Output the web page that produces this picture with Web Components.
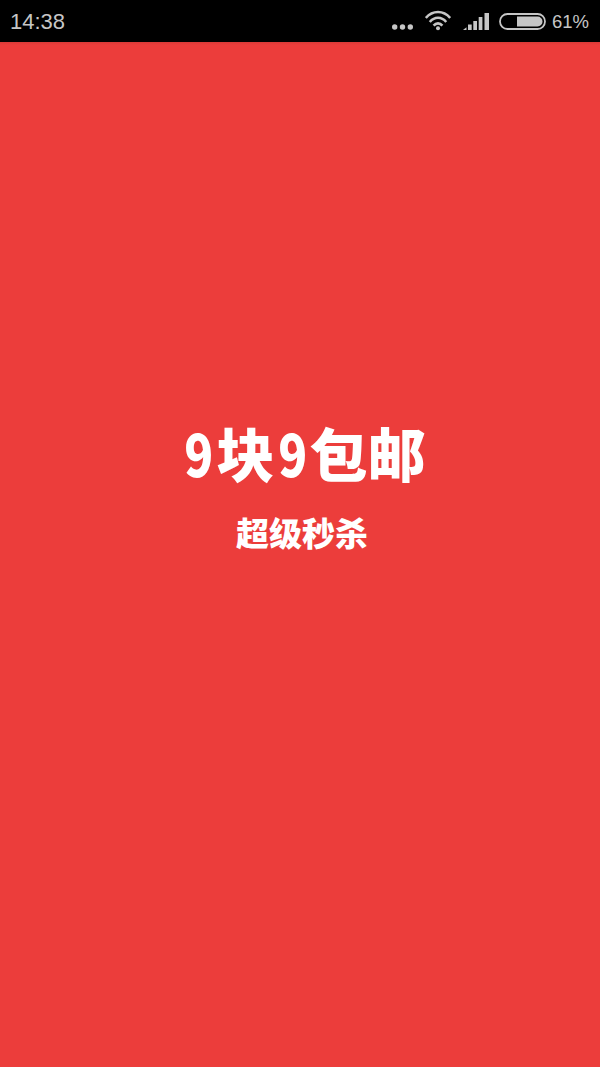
<!DOCTYPE html>
<html lang="zh">
<head>
<meta charset="utf-8">
<title>9块9包邮</title>
<style>
  html, body { margin: 0; height: 100%; background: #ec3d3b; }
  body { display: flex; flex-direction: column; height: 1067px; overflow: hidden; }
</style>
</head>
<body>
<status-bar time="14:38" battery="61%"></status-bar>
<splash-screen></splash-screen>
<script>
class StatusBar extends HTMLElement {
  constructor () {
    super()
    this.attachShadow({ mode: 'open' })
    this.shadowRoot.innerHTML = `
    <style>
      :host {
        display: flex;
        align-items: center;
        justify-content: space-between;
        flex: none;
        height: 42px;
        padding: 0 11px 0 10px;
        box-sizing: border-box;
        background: #000;
        color: #c6c6c6;
        font: 22px "Liberation Sans", Arial, sans-serif;
      }
      .icons { display: flex; align-items: center; }
      svg { display: block; }
      .time { padding-top: 2px; }
      .dots { margin-right: 12px; }
      .wifi { margin-right: 12px; }
      .signal { margin-right: 10px; }
      .battery { margin-right: 6px; }
      .level { font-size: 18.5px; padding-top: 1px; }
    </style>
    <span class="time">${this.getAttribute('time')}</span>
    <div class="icons">
      <svg class="dots" width="21" height="42" viewBox="0 0 21 42" fill="#c6c6c6">
        <circle cx="2.700" cy="27" r="2.700"/><circle cx="10.500" cy="27" r="2.700"/><circle cx="18.300" cy="27" r="2.700"/>
      </svg>
      <svg class="wifi" width="26" height="42" viewBox="0 0 26 42" fill="none" stroke="#c6c6c6" stroke-width="2.600">
        <path d="M.8 18C7.500 10 18.500 10 25.200 18"/>
        <path d="M4.800 22C9.600 16.400 16.400 16.400 21.200 22"/>
        <path d="M8.600 25.600C11.200 22.600 14.800 22.600 17.400 25.600"/>
        <circle cx="13" cy="28.300" r="2" fill="#c6c6c6" stroke="none"/>
      </svg>
      <svg class="signal" width="26" height="42" viewBox="0 0 26 42" fill="#c6c6c6">
        <path d="M0 30l3.500-2.800V30z"/>
        <rect x="5" y="24.500" width="3.700" height="5.500"/>
        <rect x="10.300" y="21" width="3.700" height="9"/>
        <rect x="15.700" y="17" width="3.700" height="13"/>
        <rect x="21.500" y="13" width="4.500" height="17"/>
      </svg>
      <svg class="battery" width="47" height="42" viewBox="0 0 47 42">
        <rect x="1" y="14" width="45" height="15" rx="7.500" fill="none" stroke="#c6c6c6" stroke-width="1.800"/>
        <path d="M18 16.500h20.500a5 5 0 0 1 0 10H18z" fill="#c6c6c6"/>
      </svg>
      <span class="level">${this.getAttribute('battery')}</span>
    </div>
    `
  }
}

class SplashScreen extends HTMLElement {
  constructor () {
    super()
    this.attachShadow({ mode: 'open' })
    this.shadowRoot.innerHTML = `
    <style>
      :host {
        display: flex;
        flex-direction: column;
        align-items: center;
        flex: 1;
        padding-top: 373px;
        background: linear-gradient(#d93a37, #ec3d3b 3px);
        color: #fff;
        font-family: "Noto Sans CJK SC", "Liberation Sans", sans-serif;
        font-weight: 900;
      }
      h1 {
        display: flex;
        margin: 0 0 0 7px;
        font-size: 58px;
        line-height: 74px;
        font-weight: 900;
        white-space: nowrap;
      }
      /* the logo's 9 is much narrower than the Noto one */
      .nine {
        display: inline-block;
        width: 35px;
        text-align: center;
        transform: scaleX(.82);
      }
      p {
        margin: 23px 0 0 4px;
        font-size: 33px;
        line-height: 40px;
        white-space: nowrap;
      }
    </style>
    <h1><span class="nine">9</span><span>块</span><span class="nine">9</span><span>包邮</span></h1>
    <p>超级秒杀</p>
    `
  }
}

customElements.define('status-bar', StatusBar)
customElements.define('splash-screen', SplashScreen)
</script>
</body>
</html>
